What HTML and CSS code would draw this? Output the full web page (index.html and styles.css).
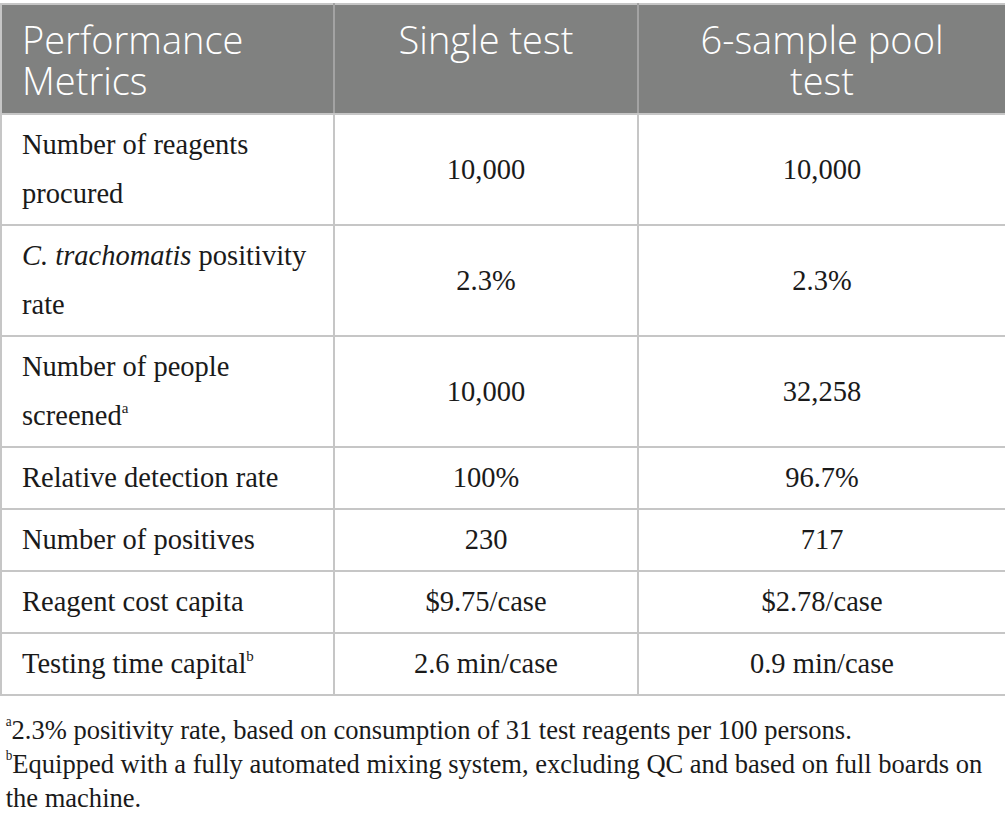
FILE: index.html
```html
<!DOCTYPE html>
<html lang="en">
<head>
<meta charset="utf-8">
<title>Performance Metrics</title>
<link rel="stylesheet" href="styles.css">
</head>
<body>
<div class="page">
  <table class="metrics">
    <colgroup>
      <col class="c1">
      <col class="c2">
      <col class="c3">
    </colgroup>
    <thead>
      <tr>
        <th class="left">Performance Metrics</th>
        <th>Single test</th>
        <th>6-sample pool test</th>
      </tr>
    </thead>
    <tbody>
      <tr>
        <td class="left">Number of reagents procured</td>
        <td>10,000</td>
        <td>10,000</td>
      </tr>
      <tr>
        <td class="left"><i>C. trachomatis</i> positivity rate</td>
        <td>2.3%</td>
        <td>2.3%</td>
      </tr>
      <tr>
        <td class="left">Number of people screened<sup>a</sup></td>
        <td>10,000</td>
        <td>32,258</td>
      </tr>
      <tr>
        <td class="left">Relative detection rate</td>
        <td>100%</td>
        <td>96.7%</td>
      </tr>
      <tr>
        <td class="left">Number of positives</td>
        <td>230</td>
        <td>717</td>
      </tr>
      <tr>
        <td class="left">Reagent cost capita</td>
        <td>$9.75/case</td>
        <td>$2.78/case</td>
      </tr>
      <tr>
        <td class="left">Testing time capital<sup>b</sup></td>
        <td>2.6 min/case</td>
        <td>0.9 min/case</td>
      </tr>
    </tbody>
  </table>
  <div class="notes">
    <div class="notes-inner">
      <p><sup>a</sup>2.3% positivity rate, based on consumption of 31 test reagents per 100 persons.</p>
      <p><sup>b</sup>Equipped with a fully automated mixing system, excluding QC and based on full boards on the machine.</p>
    </div>
  </div>
</div>
</body>
</html>
```
FILE: styles.css
```css
html, body {
  margin: 0;
  padding: 0;
  background: #ffffff;
}

body {
  overflow: hidden;
}

.page {
  width: 1005px;
  padding-top: 3px;
}

.metrics {
  width: 1005px;
  table-layout: fixed;
  border-collapse: collapse;
  border: 2px solid #c6c6c6;
}

.c1 { width: 333px; }
.c2 { width: 304px; }
.c3 { width: 368px; }

.metrics th {
  background: #808180;
  color: #ffffff;
  font-family: "Open Sans", sans-serif;
  font-weight: 300;
  font-size: 38px;
  line-height: 41px;
  padding: 14px 30px 12px;
  text-align: center;
  vertical-align: top;
  border: 2px solid #a3a3a3;
  border-top-color: #c6c6c6;
  border-bottom-color: #c6c6c6;
}

.metrics th.left {
  padding-left: 20px;
  padding-right: 20px;
}

.metrics th:first-child { border-left-color: #c6c6c6; }
.metrics th:last-child { border-right-color: #c6c6c6; }

.metrics td {
  font-family: "Liberation Serif", "Times New Roman", serif;
  font-size: 28.5px;
  line-height: 49px;
  color: #1a1a1a;
  padding: 5px 20px 6px;
  text-align: center;
  vertical-align: middle;
  border: 2px solid #c6c6c6;
}

.metrics .left {
  text-align: left;
}

.metrics sup {
  font-size: 15px;
  line-height: 0;
  vertical-align: 12px;
}

.notes {
  width: 1005px;
  overflow: hidden;
  margin-top: 17px;
}

.notes-inner {
  width: 1061px;
  transform: scaleX(0.947);
  transform-origin: left top;
  padding-left: 6px;
  box-sizing: border-box;
}

.notes p {
  margin: 0;
  font-family: "Liberation Serif", "Times New Roman", serif;
  font-size: 28px;
  line-height: 34px;
  color: #1a1a1a;
}

.notes sup {
  font-size: 14px;
  line-height: 0;
  vertical-align: 13px;
}
```
